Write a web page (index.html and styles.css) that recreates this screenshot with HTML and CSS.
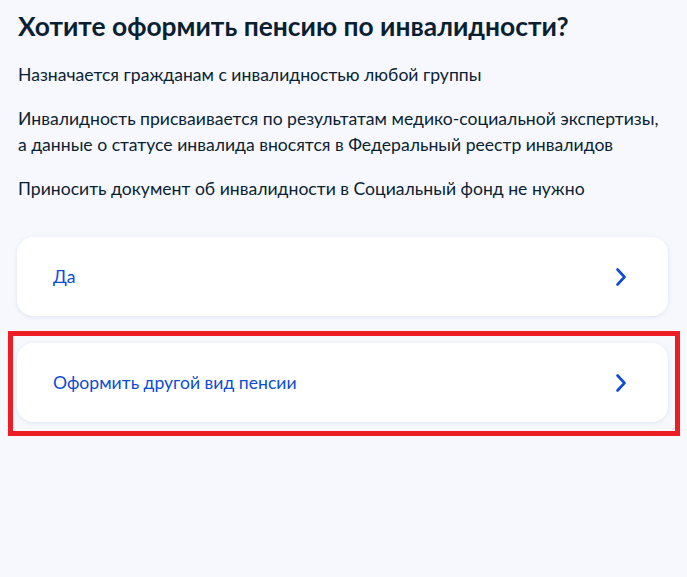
FILE: index.html
```html
<!DOCTYPE html>
<html lang="ru">
<head>
<meta charset="utf-8">
<link rel="stylesheet" href="styles.css">
</head>
<body>
<main class="page">
  <h1 class="title">Хотите оформить пенсию по инвалидности?</h1>
  <p class="text">Назначается гражданам с инвалидностью любой группы</p>
  <p class="text">Инвалидность присваивается по результатам медико-социальной экспертизы, а данные о статусе инвалида вносятся в Федеральный реестр инвалидов</p>
  <p class="text">Приносить документ об инвалидности в Социальный фонд не нужно</p>
  <div class="options">
    <a class="card" href="#">
      <span class="card-label">Да</span>
      <svg class="chevron" width="12" height="20" viewBox="0 0 12 20"><path d="M2.5 2.5 L9.5 10 L2.5 17.5" fill="none" stroke="#0d4cd3" stroke-width="2.6" stroke-linecap="round" stroke-linejoin="round"/></svg>
    </a>
    <div class="highlight-wrap">
      <a class="card" href="#">
        <span class="card-label">Оформить другой вид пенсии</span>
        <svg class="chevron" width="12" height="20" viewBox="0 0 12 20"><path d="M2.5 2.5 L9.5 10 L2.5 17.5" fill="none" stroke="#0d4cd3" stroke-width="2.6" stroke-linecap="round" stroke-linejoin="round"/></svg>
      </a>
      <div class="highlight"></div>
    </div>
  </div>
</main>
</body>
</html>
```

FILE: styles.css
```css
html, body {
  margin: 0;
  padding: 0;
  background: #f6f8fd;
}
body {
  font-family: Lato, "Noto Sans", sans-serif;
  color: #0b1f33;
  min-height: 100vh;
}
.page {
  padding: 8px 19px 60px 17px;
}
.title {
  margin: 0 0 0 1px;
  font-size: 26.4px;
  line-height: 36px;
  font-weight: 700;
  color: #0b1f33;
}
.text {
  margin: 18px 0 0 1px;
  font-size: 17.6px;
  line-height: 26px;
}
.options {
  margin-top: 35px;
  display: flex;
  flex-direction: column;
  gap: 27px;
}
.card {
  display: flex;
  align-items: center;
  justify-content: space-between;
  height: 79px;
  box-sizing: border-box;
  padding: 0 41px 0 36px;
  background: #ffffff;
  border-radius: 16px;
  box-shadow: 0 1px 4px rgba(107, 128, 167, 0.16);
  text-decoration: none;
  color: #0d4cd3;
  font-size: 17.6px;
}
.chevron {
  display: block;
}
.highlight-wrap {
  position: relative;
}
.highlight {
  position: absolute;
  left: -9px;
  right: -12px;
  top: -12px;
  bottom: -14px;
  border: 5px solid #ee1c25;
  pointer-events: none;
}
```
